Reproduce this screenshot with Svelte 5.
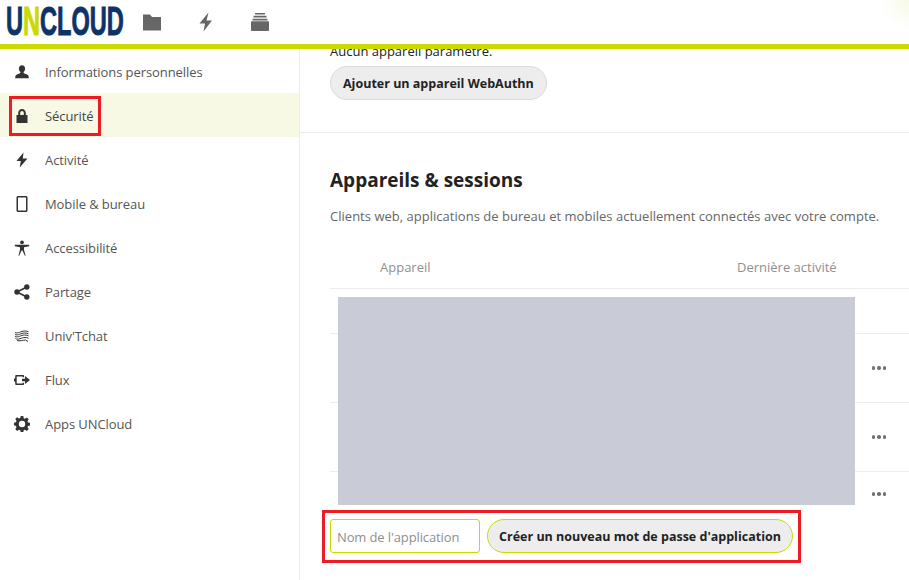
<script>
	const menu = [
		{ label: 'Informations personnelles', icon: 'user' },
		{ label: 'Sécurité', icon: 'lock', active: true },
		{ label: 'Activité', icon: 'bolt' },
		{ label: 'Mobile & bureau', icon: 'phone' },
		{ label: 'Accessibilité', icon: 'access' },
		{ label: 'Partage', icon: 'share' },
		{ label: "Univ'Tchat", icon: 'chat' },
		{ label: 'Flux', icon: 'flux' },
		{ label: 'Apps UNCloud', icon: 'gear' }
	];

	const rows = [
		{ height: 45, more: false },
		{ height: 69, more: true },
		{ height: 69, more: true },
		{ height: 44, more: true }
	];
</script>

{#snippet icon(name)}
	<svg viewBox="0 0 16 16" width="16" height="16" fill="currentColor" aria-hidden="true">
		{#if name === 'user'}
			<path d="M8 1.2c-1.900 0-3.100 1.500-3.100 3.300 0 1.300.5 2.600 1.300 3.300.3.3.3.8.1 1.100-.3.5-3.900 1.200-4.600 2.500-.4.7-.5 2-.5 2.800h13.600c0-.8-.1-2.100-.5-2.800-.7-1.300-4.300-2-4.600-2.500-.2-.3-.2-.8.1-1.100.8-.7 1.300-2 1.300-3.300 0-1.800-1.200-3.300-3.100-3.300z" />
		{:else if name === 'lock'}
			<path fill-rule="evenodd" d="M8 1C5.800 1 4.200 2.700 4.200 5v2H2.500v8h11V7h-1.700V5C11.800 2.700 10.200 1 8 1zm0 1.900c1.100 0 1.800.9 1.800 2.100v2H6.200V5c0-1.200.7-2.100 1.800-2.100z" />
		{:else if name === 'bolt'}
			<path d="M9.500.5 2.500 9h4.300l-1.100 6.500L13.500 6.500H8.800z" />
		{:else if name === 'phone'}
			<path fill-rule="evenodd" d="M4 0C3.200 0 2.500.7 2.500 1.500v13c0 .8.7 1.500 1.500 1.500h8c.8 0 1.500-.7 1.500-1.500v-13C13.500.7 12.800 0 12 0zm0 1.500h8v13H4z" />
		{:else if name === 'access'}
			<circle cx="8" cy="2.300" r="1.900" />
			<path d="M.8 4.800h14.400v1.400l-5.200 1.100v2.500l1.600 6H10.900L8.400 10.600h-.8L5.100 15.800H4.400l1.600-6V7.300L.8 6.200z" />
		{:else if name === 'share'}
			<circle cx="3" cy="8" r="2.700" />
			<circle cx="12.800" cy="3" r="2.700" />
			<circle cx="12.800" cy="13" r="2.700" />
			<path d="M3 8l9.800-5M3 8l9.800 5" stroke="currentColor" stroke-width="1.600" fill="none" />
		{:else if name === 'chat'}
			<path d="M1 4.500c3 1.500 6-1.500 9.500-1.500 1.800 0 3 .3 4 .8M1 6.500c3 1.500 6-1.500 9.500-1.500 1.800 0 3 .3 4 .8M1 8.500c3 1.500 6-1.500 9.500-1.500 1.800 0 3 .3 4 .8M1.500 10.500c2.500 2 6-1 9.500-1 1.200 0 2.500.2 3.500.7M3 12.500c2.500 1 6-.5 8.500-.5l2.500 1.500" stroke="currentColor" stroke-width="1" fill="none" />
		{:else if name === 'flux'}
			<path fill-rule="evenodd" d="M2.500 3C1.700 3 1.200 3.500 1.200 4.300v2.200H0v3h1.200v2.200c0 .8.5 1.300 1.300 1.300h6.300c.8 0 1.300-.5 1.300-1.300v-1H8.600v.8H2.700V4.500h5.900v.8h1.500v-1c0-.8-.5-1.300-1.300-1.300z" />
			<path d="M8 6.800h3V4l5 4-5 4V9.200H8z" />
		{:else if name === 'gear'}
			<path fill-rule="evenodd" d="M6.700 0h2.600l.4 2.200 1.300.5 1.900-1.200 1.800 1.800-1.200 1.900.5 1.300 2.200.4v2.600l-2.200.4-.5 1.300 1.200 1.900-1.800 1.800-1.900-1.200-1.300.5-.4 2.300H6.700l-.4-2.300-1.300-.5-1.900 1.200-1.800-1.800 1.200-1.900-.5-1.300L-.2 9.300V6.700l2.200-.4.5-1.300L1.300 3.100l1.800-1.800L5 2.500l1.300-.5zM8 4.800a3.200 3.200 0 1 0 0 6.400 3.200 3.200 0 0 0 0-6.400z" />
		{/if}
	</svg>
{/snippet}

<div class="page">
	<header class="topbar">
		<div class="logo"><span class="logo-text">U<span class="logo-n">N</span>CLOUD</span></div>
		<nav class="apps">
			<svg viewBox="0 0 20 20" width="20" height="20" fill="currentColor" aria-hidden="true">
				<path d="M1 2.500h7l2 2.500h9v13.500H1z" />
			</svg>
			<svg viewBox="0 0 20 20" width="20" height="20" fill="currentColor" aria-hidden="true">
				<path d="M12.500 .5 3.500 11.500h5.500L7.500 19.500 16 8.500h-5.500z" />
			</svg>
			<svg viewBox="0 0 20 20" width="20" height="20" fill="currentColor" aria-hidden="true">
				<path d="M5 1h10v1.500H5zM3.500 3.700h13v1.800h-13zM2.500 6.700h15v1.800h-15zM1 10c0-.3.3-.7.700-.7h16.600c.4 0 .7.4.7.7v8c0 .6-.5 1-1 1H2c-.5 0-1-.4-1-1z" />
			</svg>
		</nav>
	</header>

	<div class="body">
		<aside class="sidebar">
			<ul>
				{#each menu as item}
					<li class:active={item.active}>
						<span class="menu-icon">{@render icon(item.icon)}</span>
						{item.label}
					</li>
				{/each}
			</ul>
			<div class="mark mark-menu"></div>
		</aside>

		<main class="content">
			<div class="scroller">
				<section class="webauthn">
					<p class="no-device">Aucun appareil paramétré.</p>
					<button class="btn">Ajouter un appareil WebAuthn</button>
				</section>

				<section class="sessions">
					<h2>Appareils &amp; sessions</h2>
					<p class="desc">Clients web, applications de bureau et mobiles actuellement connectés avec votre compte.</p>

					<div class="table-head">
						<span>Appareil</span>
						<span class="last">Dernière activité</span>
					</div>
					<div class="table-rows">
						{#each rows as row, i}
							<div class="row" class:last-row={i === rows.length - 1} style="height: {row.height}px">
								{#if row.more}
									<span class="more"><i></i><i></i><i></i></span>
								{/if}
							</div>
						{/each}
						<div class="redacted"></div>
					</div>
				</section>

				<form class="new-pass" onsubmit={(e) => e.preventDefault()}>
					<input type="text" placeholder="Nom de l'application" />
					<button class="btn btn-primary">Créer un nouveau mot de passe d'application</button>
					<div class="mark mark-form"></div>
				</form>
			</div>
		</main>
	</div>
</div>

<style>
	:global(body) {
		margin: 0;
		background: #fff;
	}

	.page {
		width: 909px;
		height: 580px;
		overflow: hidden;
		display: flex;
		flex-direction: column;
		font-family: 'Open Sans', 'Noto Sans', sans-serif;
		font-size: 13px;
		color: #222;
	}

	.topbar {
		height: 44px;
		flex: none;
		display: flex;
		align-items: center;
		border-bottom: 5px solid #cbd900;
		background: radial-gradient(circle at 100% 0, #f8fae6 0, #fff 30px);
	}

	.logo {
		flex: none;
		padding-left: 6px;
		margin-right: -69px;
		margin-top: -2px;
	}

	.logo-text {
		display: inline-block;
		font-family: 'Liberation Sans', sans-serif;
		font-weight: 700;
		font-size: 41px;
		line-height: 44px;
		color: #0d3368;
		-webkit-text-stroke: 1px currentColor;
		transform: scaleX(0.575);
		transform-origin: left center;
		white-space: nowrap;
	}

	.logo-n {
		color: #cbd900;
	}

	.apps {
		display: flex;
		gap: 34px;
		color: #666;
	}

	.body {
		flex: 1;
		min-height: 0;
		display: flex;
	}

	.sidebar {
		position: relative;
		width: 299px;
		flex: none;
		border-right: 1px solid #ededed;
	}

	.sidebar ul {
		list-style: none;
		margin: 0;
		padding: 0;
	}

	.sidebar li {
		height: 44px;
		box-sizing: border-box;
		padding-top: 2px;
		display: flex;
		align-items: center;
		color: #555;
		letter-spacing: -0.08px;
	}

	.sidebar li.active {
		background: #f7f9e5;
		color: #444;
	}

	.menu-icon {
		width: 45px;
		flex: none;
		display: flex;
		padding-left: 14px;
		box-sizing: border-box;
		color: #333;
	}

	.content {
		flex: 1;
		min-width: 0;
		overflow: hidden;
	}

	.scroller {
		margin-top: -7px;
	}

	.webauthn {
		padding: 0 30px 32px;
		border-bottom: 1px solid #ededed;
	}

	.no-device {
		margin: 0 0 5px;
		line-height: 19px;
		color: #222;
	}

	.btn {
		height: 34px;
		padding: 1px 12px 0;
		border: 1px solid #dbdbdb;
		border-radius: 17px;
		background: #ededed;
		font: 700 12.5px 'Open Sans', 'Noto Sans', sans-serif;
		color: #222;
		box-sizing: border-box;
	}

	.sessions {
		padding: 32px 0 0 30px;
	}

	h2 {
		margin: 0;
		font-size: 19px;
		line-height: 30px;
		font-weight: 700;
		color: #222;
	}

	.desc {
		margin: 11px 0 0;
		line-height: 20px;
		color: #666;
		letter-spacing: 0.02px;
	}

	.table-head {
		margin-top: 19px;
		height: 43px;
		display: flex;
		align-items: center;
		border-bottom: 1px solid #ededed;
		color: #8f8f8f;
	}

	.table-head span:first-child {
		margin-left: 50px;
		width: 357px;
	}

	.table-rows {
		position: relative;
	}

	.row {
		box-sizing: border-box;
		display: flex;
		align-items: center;
		justify-content: flex-end;
		padding-right: 23px;
		border-bottom: 1px solid #ededed;
	}

	.last-row {
		border-bottom: 0;
	}

	.more {
		display: flex;
		gap: 2px;
	}

	.more i {
		width: 3.5px;
		height: 3.5px;
		border-radius: 50%;
		background: #707070;
	}

	.redacted {
		position: absolute;
		left: 8px;
		top: 8px;
		width: 517px;
		height: 208px;
		background: #c9cbd7;
	}

	.new-pass {
		position: relative;
		display: flex;
		gap: 7px;
		padding-left: 30px;
		margin-top: 3px;
	}

	input {
		width: 150px;
		height: 34px;
		box-sizing: border-box;
		padding: 1px 6px 0;
		border: 1px solid #cbd900;
		border-radius: 3px;
		font: 13px 'Open Sans', 'Noto Sans', sans-serif;
		letter-spacing: -0.12px;
		background: #fff;
	}

	input::placeholder {
		color: #8f8f8f;
		opacity: 1;
	}

	.btn-primary {
		width: 306px;
		border-color: #cbd900;
		padding: 1px 0 0;
	}

	.mark {
		position: absolute;
		border: 3px solid #ed1c24;
		box-sizing: border-box;
		pointer-events: none;
	}

	.mark-menu {
		left: 9px;
		top: 47px;
		width: 92px;
		height: 40px;
	}

	.mark-form {
		left: 22px;
		top: -9px;
		width: 479px;
		height: 53px;
	}
</style>
